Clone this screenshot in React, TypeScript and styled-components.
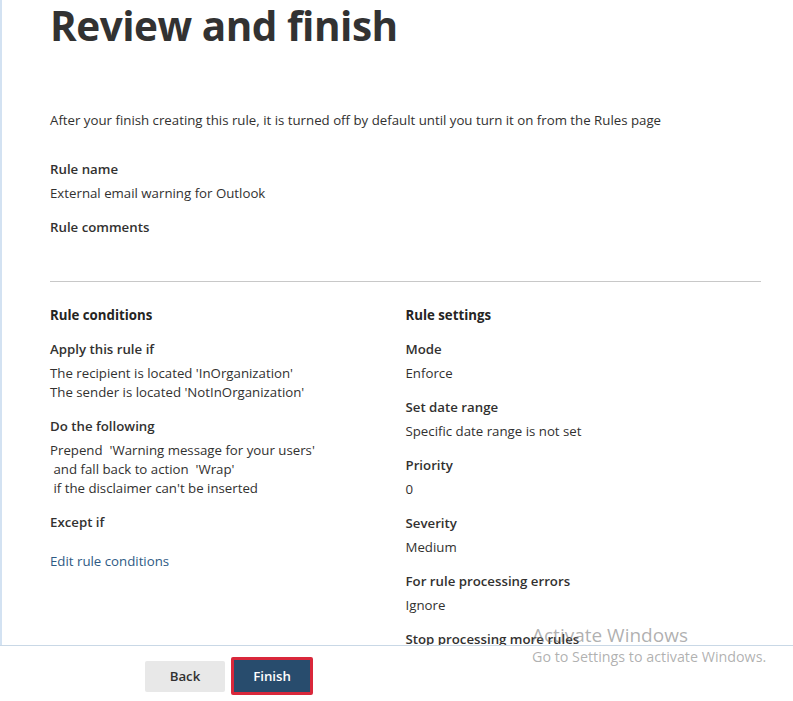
import React from 'react';
import styled, { createGlobalStyle } from 'styled-components';

const GlobalStyle = createGlobalStyle`
  body {
    margin: 0;
    background: #ffffff;
    font-family: 'Open Sans', 'Noto Sans', sans-serif;
    color: #323130;
  }
`;

interface Field {
  label: string;
  lines: string[];
}

const settings: Field[] = [
  { label: 'Mode', lines: ['Enforce'] },
  { label: 'Set date range', lines: ['Specific date range is not set'] },
  { label: 'Priority', lines: ['0'] },
  { label: 'Severity', lines: ['Medium'] },
  { label: 'For rule processing errors', lines: ['Ignore'] },
  { label: 'Stop processing more rules', lines: ['No'] },
];

const conditions: Field[] = [
  {
    label: 'Apply this rule if',
    lines: ["The recipient is located 'InOrganization'", "The sender is located 'NotInOrganization'"],
  },
  {
    label: 'Do the following',
    lines: [
      "Prepend  'Warning message for your users'",
      " and fall back to action  'Wrap'",
      " if the disclaimer can't be inserted",
    ],
  },
  { label: 'Except if', lines: [] },
];

const App: React.FC = () => {
  return (
    <Page>
      <GlobalStyle />
      <Main>
        <Title>Review and finish</Title>
        <Intro>After your finish creating this rule, it is turned off by default until you turn it on from the Rules page</Intro>

        <Group>
          <Label>Rule name</Label>
          <Value>External email warning for Outlook</Value>
        </Group>
        <Group>
          <Label>Rule comments</Label>
          <Value>&nbsp;</Value>
        </Group>

        <Divider />

        <Columns>
          <Column>
            <SectionTitle>Rule conditions</SectionTitle>
            {conditions.map((f) => (
              <Group key={f.label}>
                <Label>{f.label}</Label>
                {f.lines.map((l, i) => (
                  <Value key={i} tight={i > 0}>
                    {l}
                  </Value>
                ))}
              </Group>
            ))}
            <EditLink href="#">Edit rule conditions</EditLink>
          </Column>
          <Column>
            <SectionTitle>Rule settings</SectionTitle>
            {settings.map((f) => (
              <Group key={f.label}>
                <Label>{f.label}</Label>
                {f.lines.map((l, i) => (
                  <Value key={i}>{l}</Value>
                ))}
              </Group>
            ))}
          </Column>
        </Columns>
      </Main>

      <Footer>
        <Button>Back</Button>
        <Button primary>Finish</Button>
      </Footer>

      <Watermark>
        <WatermarkTitle>Activate Windows</WatermarkTitle>
        <WatermarkText>Go to Settings to activate Windows.</WatermarkText>
      </Watermark>
    </Page>
  );
};

export default App;

const Page = styled.div`
  position: relative;
  width: 793px;
  height: 701px;
  display: flex;
  flex-direction: column;
  overflow: hidden;
`;

const Main = styled.div`
  height: 645px;
  flex-shrink: 0;
  border-left: 2px solid #d3e2f2;
  padding: 0 32px 0 48px;
  overflow: hidden;
`;

const Title = styled.h1`
  margin: 0;
  font-size: 40.5px;
  line-height: 52px;
  font-weight: 700;
  color: #323232;
  letter-spacing: -0.5px;
`;

const Intro = styled.p`
  margin: 58px 0 0;
  font-size: 13.25px;
  line-height: 20px;
`;

const Group = styled.div`
  margin-top: 14px;

  &:first-of-type {
    margin-top: 29px;
  }
`;

const Label = styled.div`
  font-size: 13.25px;
  line-height: 20px;
  font-weight: 600;
  color: #323130;
`;

const Value = styled.div<{ tight?: boolean }>`
  margin-top: ${({ tight }) => (tight ? '0' : '5px')};
  font-size: 13.25px;
  line-height: 19px;
  white-space: pre;
  color: #323130;
`;

const Divider = styled.hr`
  margin: 20px 0 0;
  border: none;
  border-top: 1px solid #c8c8c8;
`;

const Columns = styled.div`
  display: grid;
  grid-template-columns: 1fr 1fr;
  margin-top: 23px;
`;

const Column = styled.div`
  display: flex;
  flex-direction: column;

  & > ${Group}:first-of-type {
    margin-top: 14px;
  }
`;

const SectionTitle = styled.div`
  font-size: 13.25px;
  line-height: 20px;
  font-weight: 700;
  color: #252423;
`;

const EditLink = styled.a`
  margin-top: 19px;
  font-size: 13.25px;
  line-height: 20px;
  color: #2e5a84;
  text-decoration: none;
  align-self: flex-start;
`;

const Footer = styled.div`
  flex: 1;
  display: flex;
  align-items: center;
  gap: 6px;
  padding: 5px 0 0 145px;
  border-top: 1px solid #c9d8e6;
`;

const Button = styled.button<{ primary?: boolean }>`
  box-sizing: border-box;
  width: ${({ primary }) => (primary ? '82px' : '80px')};
  height: ${({ primary }) => (primary ? '38px' : '31px')};
  border: ${({ primary }) => (primary ? '3px solid #d9283b' : 'none')};
  border-radius: 2px;
  background: ${({ primary }) => (primary ? '#284c6d' : '#e8e8e8')};
  color: ${({ primary }) => (primary ? '#ffffff' : '#323130')};
  font-family: 'Open Sans', 'Noto Sans', sans-serif;
  font-size: 13.25px;
  font-weight: 600;
  cursor: pointer;
`;

const Watermark = styled.div`
  position: absolute;
  left: 532px;
  top: 623px;
  color: rgba(110, 110, 110, 0.55);
  pointer-events: none;
`;

const WatermarkTitle = styled.div`
  font-size: 19px;
  line-height: 24px;
`;

const WatermarkText = styled.div`
  font-size: 14.3px;
  line-height: 20px;
`;
